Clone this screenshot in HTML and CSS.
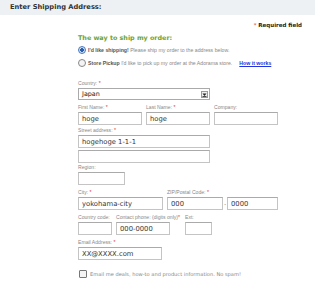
FILE: index.html
```html
<!DOCTYPE html>
<html lang="en">
<head>
    <meta charset="UTF-8">
    <title>Enter Shipping Address</title>
    <link rel="stylesheet" href="styles.css">
</head>
<body>
    <div class="header">Enter Shipping Address:</div>
    <div class="required"><span class="star">*</span> Required field</div>

    <div class="form">
        <h3 class="ship-title">The way to ship my order:</h3>
        <div class="ship-option">
            <span class="radio checked"></span>
            <span><b>I'd like shipping!</b> Please ship my order to the address below.</span>
        </div>
        <div class="ship-option">
            <span class="radio"></span>
            <span><b>Store Pickup</b> I'd like to pick up my order at the Adorama store.</span>
            <a href="#" class="how">How it works</a>
        </div>

        <div class="field country-row">
            <label>Country: <span class="star">*</span></label>
            <div class="select">
                <span class="select-value">Japan</span>
                <span class="arrow"><svg width="5" height="5" viewBox="0 0 5 5"><path d="M0.5 1.5 L4.5 1.5 L2.5 4 Z" fill="#222"/><rect x="0.5" y="4" width="4" height="0.8" fill="#222"/></svg></span>
            </div>
        </div>

        <div class="row gap-1">
            <div class="field">
                <label>First Name: <span class="star">*</span></label>
                <input class="w-name" type="text" value="hoge">
            </div>
            <div class="field">
                <label>Last Name: <span class="star">*</span></label>
                <input class="w-name" type="text" value="hoge">
            </div>
            <div class="field">
                <label>Company:</label>
                <input class="w-name" type="text" value="">
            </div>
        </div>

        <div class="field street">
            <label>Street address: <span class="star">*</span></label>
            <input class="w-street" type="text" value="hogehoge 1-1-1">
            <input class="w-street second" type="text" value="">
        </div>

        <div class="field">
            <label>Region:</label>
            <input class="w-region" type="text" value="">
        </div>

        <div class="row">
            <div class="field">
                <label>City: <span class="star">*</span></label>
                <input class="w-city" type="text" value="yokohama-city">
            </div>
            <div class="field">
                <label>ZIP/Postal Code: <span class="star">*</span></label>
                <div class="zip">
                    <input class="w-zip" type="text" value="000">
                    <span class="dash">-</span>
                    <input class="w-zip2" type="text" value="0000">
                </div>
            </div>
        </div>

        <div class="row">
            <div class="field">
                <label>Country code:</label>
                <input class="w-cc" type="text" value="">
            </div>
            <div class="field">
                <label>Contact phone: (digits only)<span class="star">*</span></label>
                <input class="w-phone" type="text" value="000-0000">
            </div>
            <div class="field ext">
                <label>Ext:</label>
                <input class="w-ext" type="text" value="">
            </div>
        </div>

        <div class="field">
            <label>Email Address: <span class="star">*</span></label>
            <input class="w-email" type="text" value="XX@XXXX.com">
        </div>

        <div class="optin">
            <span class="checkbox"></span>
            <span>Email me deals, how-to and product information. No spam!</span>
        </div>
    </div>
</body>
</html>
```

FILE: styles.css
```css
body { margin: 0; background: #fff; font-family: "Liberation Sans", Arial, sans-serif; color: #777; }

.header { width: 305px; height: 15px; line-height: 15px; padding-left: 10px; background: #eef1f4; font-family: "DejaVu Sans", Verdana, sans-serif; font-weight: bold; font-size: 6.7px; color: #333; }
.required { text-align: right; padding-right: 18px; margin-top: 7px; height: 7px; line-height: 7px; font-family: "DejaVu Sans", Verdana, sans-serif; font-weight: bold; font-size: 5.5px; color: #222; }
.star { color: #e0303a; font-weight: normal; }

.form { padding-left: 78px; }
.ship-title { margin: 4px 0 0; height: 10px; line-height: 10px; font-family: "DejaVu Sans", Verdana, sans-serif; font-size: 6.4px; color: #6aa336; }
.ship-option { display: flex; align-items: center; gap: 2px; height: 13px; font-size: 5.2px; color: #888; white-space: nowrap; }
.ship-option b { color: #555; }
.radio { width: 6px; height: 6px; border: 1px solid #888; border-radius: 50%; background: #f4f4f4; box-sizing: content-box; }
.radio.checked { border-color: #4a78b8; background: radial-gradient(circle, #2a5fb0 0 1.6px, #cfe0f4 2px); }
.how { margin-left: 5px; color: #2233dd; font-weight: bold; text-decoration: underline; }

.field { display: flex; flex-direction: column; margin-bottom: 3px; }
.field label { height: 9px; line-height: 9px; font-size: 5.1px; color: #888; white-space: nowrap; }
.country-row { margin-top: 10px; }
.row { display: flex; gap: 4px; }
.row .field { margin-bottom: 3px; }
.row .field label { width: 0; overflow: visible; }
.row.gap-1 .field { margin-bottom: 1px; }
.street { margin-bottom: 0; }
.ext { margin-left: 11px; }

input { box-sizing: border-box; height: 13px; margin: 0; padding: 0 3px; border: 1px solid #c4c4c4; border-top-color: #aaa; font-family: "DejaVu Sans", Verdana, sans-serif; font-size: 6.8px; color: #333; background: #fff; outline: none; }
.w-name { width: 64px; }
.w-street { width: 132px; }
.street input.second { margin-top: 2px; }
.w-region { width: 47px; }
.w-city { width: 85px; }
.w-zip { width: 56px; }
.w-zip2 { width: 51px; }
.w-cc { width: 34px; }
.w-phone { width: 54px; }
.w-ext { width: 27px; }
.w-email { width: 84px; }
.zip { display: flex; align-items: center; }
.dash { width: 4px; text-align: center; font-size: 5px; color: #555; }

.select { box-sizing: border-box; width: 132px; height: 12px; border: 1px solid #aaa; display: flex; align-items: center; justify-content: space-between; padding: 0 1px 0 3px; background: #fff; }
.select-value { font-family: "DejaVu Sans", Verdana, sans-serif; font-size: 6.4px; color: #222; }
.arrow { width: 7px; height: 7px; border: 1px solid #999; background: #eee; display: flex; align-items: center; justify-content: center; box-sizing: border-box; }

.optin { display: flex; align-items: center; gap: 3px; margin-top: 10px; padding-left: 1px; font-family: "DejaVu Sans", Verdana, sans-serif; font-size: 5.1px; color: #888; white-space: nowrap; }
.checkbox { width: 6px; height: 6px; border: 1px solid #777; border-radius: 1px; background: #f4f4f4; }
```
